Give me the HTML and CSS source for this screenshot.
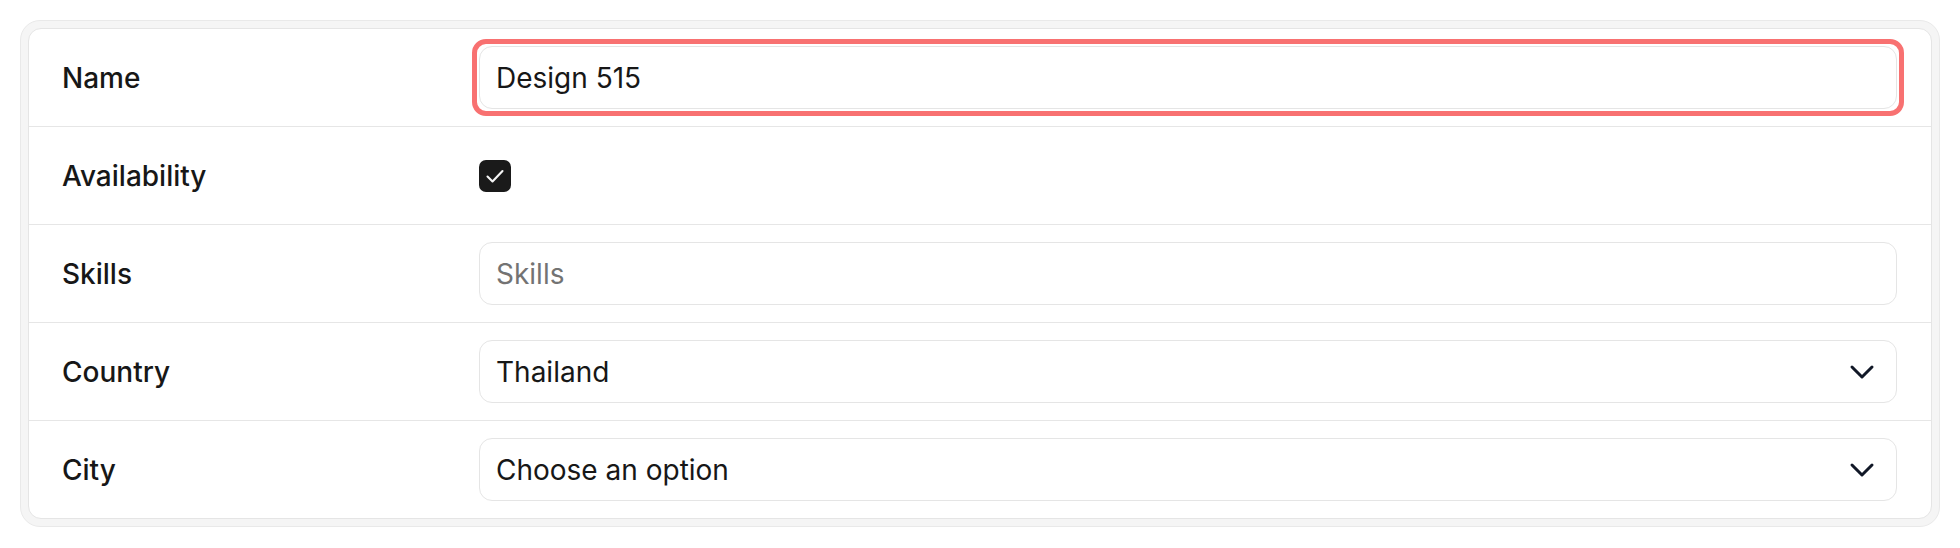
FILE: index.html
```html
<!DOCTYPE html>
<html lang="en">
<head>
<meta charset="utf-8">
<title>Form</title>
<link rel="stylesheet" href="styles.css">
</head>
<body>
<div class="panel">
  <div class="card">
    <div class="row">
      <div class="label">Name</div>
      <div class="control">
        <div class="focus-wrap">
          <input class="input" type="text" value="Design 515">
        </div>
      </div>
    </div>
    <div class="row">
      <div class="label">Availability</div>
      <div class="control">
        <span class="checkbox">
          <svg viewBox="0 0 32 32" width="32" height="32"><path d="M8.5 16.5l5 5 10-10.5" fill="none" stroke="#f5f5f5" stroke-width="2.1" stroke-linecap="round" stroke-linejoin="round"/></svg>
        </span>
      </div>
    </div>
    <div class="row">
      <div class="label">Skills</div>
      <div class="control">
        <input class="input" type="text" placeholder="Skills">
      </div>
    </div>
    <div class="row">
      <div class="label">Country</div>
      <div class="control">
        <div class="select">
          <span class="select-text">Thailand</span>
          <svg class="chev" viewBox="0 0 24 24" width="40" height="40"><path d="m6 9 6 6 6-6" fill="none" stroke="#111827" stroke-width="1.8" stroke-linecap="round" stroke-linejoin="round"/></svg>
        </div>
      </div>
    </div>
    <div class="row">
      <div class="label">City</div>
      <div class="control">
        <div class="select">
          <span class="select-text">Choose an option</span>
          <svg class="chev" viewBox="0 0 24 24" width="40" height="40"><path d="m6 9 6 6 6-6" fill="none" stroke="#111827" stroke-width="1.8" stroke-linecap="round" stroke-linejoin="round"/></svg>
        </div>
      </div>
    </div>
  </div>
</div>
</body>
</html>
```
FILE: styles.css
```css
* { box-sizing: border-box; }
body {
  margin: 20px;
  font-family: Inter, "Noto Sans", sans-serif;
  color: #171717;
  background: #fff;
}
.panel {
  width: 1920px;
  border: 1px solid #e9e9e9;
  background: #f5f5f5;
  border-radius: 20px;
  padding: 7px;
}
.card {
  background: #fff;
  border: 1px solid #e5e5e5;
  border-radius: 13px;
}
.row {
  height: 98px;
  display: flex;
  align-items: center;
  padding: 0 34px 0 33px;
  border-bottom: 1px solid #e6e6e6;
}
.row:last-child { border-bottom: none; height: 97px; }
.label {
  width: 417px;
  flex: none;
  font-size: 28px;
  font-weight: 450;
  color: #171717;
}
.control {
  flex: 1;
  display: flex;
  align-items: center;
}
.focus-wrap {
  position: relative;
  flex: 1;
  display: flex;
}
.focus-wrap::before {
  content: "";
  position: absolute;
  inset: -7px;
  border: 5px solid #f87171;
  border-radius: 14px;
  pointer-events: none;
}
.input {
  flex: 1;
  width: 100%;
  height: 63px;
  border: 1px solid #e5e5e5;
  border-radius: 13px;
  padding: 0 16px;
  font-family: Inter, "Noto Sans", sans-serif;
  font-size: 28px;
  color: #171717;
  background: #fff;
  outline: none;
}
.input::placeholder { color: #737373; }
.checkbox {
  width: 32px;
  height: 32px;
  border-radius: 7px;
  background: #1a1a1a;
  display: flex;
}
.select {
  flex: 1;
  height: 63px;
  border: 1px solid #e5e5e5;
  border-radius: 13px;
  padding: 0 14px 0 16px;
  display: flex;
  align-items: center;
  justify-content: space-between;
  font-size: 28px;
  color: #171717;
}
.chev { display: block; }
```
